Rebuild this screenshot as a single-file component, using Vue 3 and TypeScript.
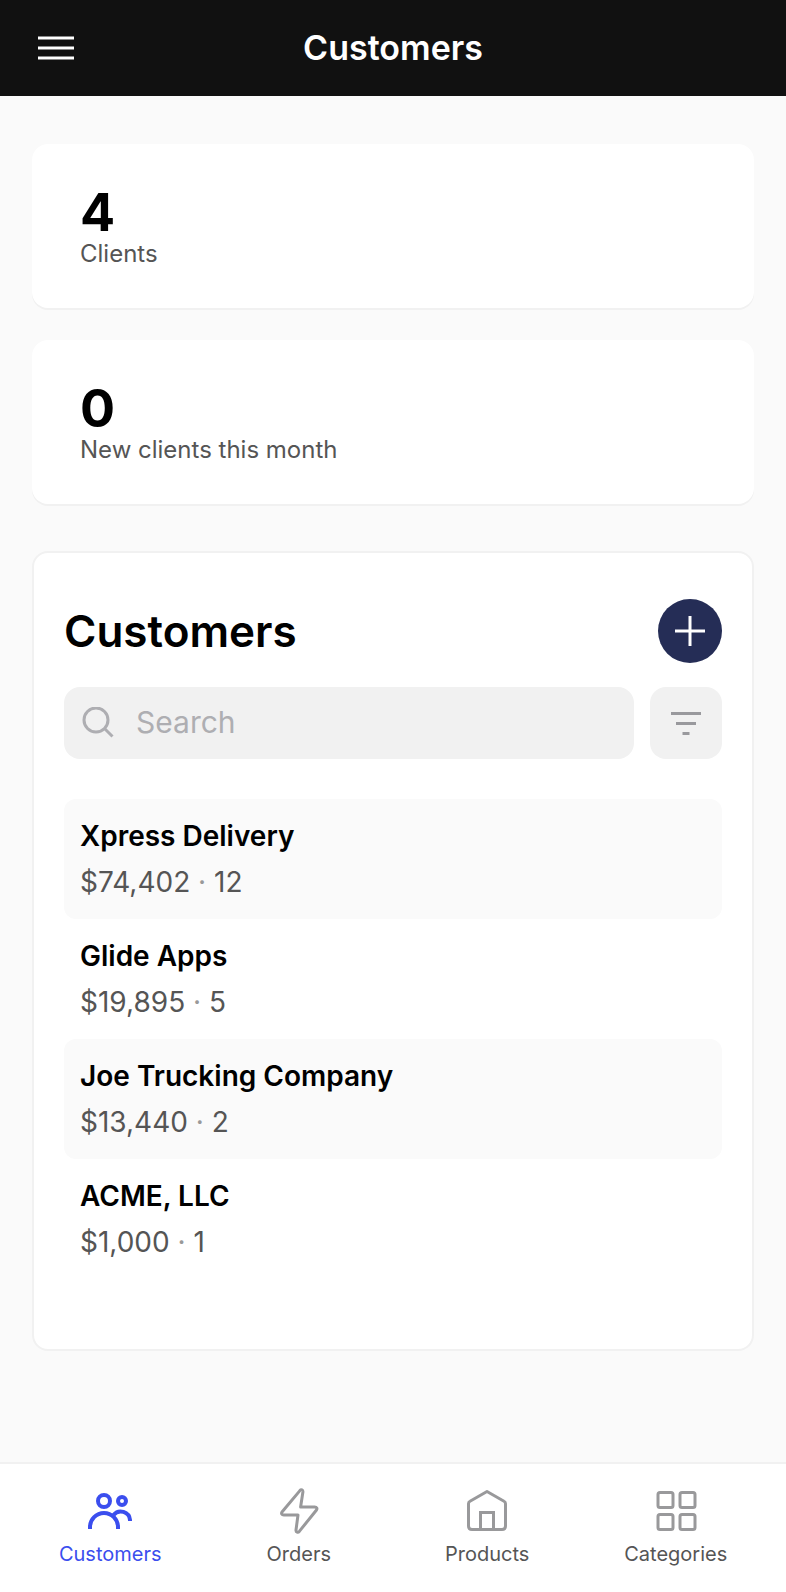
<script setup lang="ts">
import { ref } from 'vue'

interface Stat {
  value: number
  label: string
}

interface Customer {
  name: string
  total: string
  orders: number
}

type TabId = 'customers' | 'orders' | 'products' | 'categories'

const stats: Stat[] = [
  { value: 4, label: 'Clients' },
  { value: 0, label: 'New clients this month' },
]

const customers: Customer[] = [
  { name: 'Xpress Delivery', total: '$74,402', orders: 12 },
  { name: 'Glide Apps', total: '$19,895', orders: 5 },
  { name: 'Joe Trucking Company', total: '$13,440', orders: 2 },
  { name: 'ACME, LLC', total: '$1,000', orders: 1 },
]

const tabs: { id: TabId; label: string }[] = [
  { id: 'customers', label: 'Customers' },
  { id: 'orders', label: 'Orders' },
  { id: 'products', label: 'Products' },
  { id: 'categories', label: 'Categories' },
]

const activeTab = ref<TabId>('customers')
const query = ref('')
</script>

<template>
  <div class="app">
    <header class="topbar">
      <button class="menu" type="button" aria-label="Open menu">
        <svg viewBox="0 0 36 24" width="36" height="24" aria-hidden="true">
          <path d="M0 2h36M0 12h36M0 22h36" fill="none" stroke="currentColor" stroke-width="3" />
        </svg>
      </button>
      <h1 class="topbar-title">Customers</h1>
    </header>

    <main class="content">
      <section class="stats" aria-label="Summary">
        <div v-for="stat in stats" :key="stat.label" class="stat">
          <strong class="stat-value">{{ stat.value }}</strong>
          <span class="stat-label">{{ stat.label }}</span>
        </div>
      </section>

      <section class="panel">
        <div class="panel-head">
          <h2 class="panel-title">Customers</h2>
          <button class="add" type="button" aria-label="Add customer">
            <svg viewBox="0 0 30 30" width="30" height="30" aria-hidden="true">
              <path d="M15 0v30M0 15h30" fill="none" stroke="currentColor" stroke-width="3" />
            </svg>
          </button>
        </div>

        <div class="tools">
          <label class="search">
            <svg viewBox="0 0 32 32" width="32" height="32" aria-hidden="true">
              <g fill="none" stroke="currentColor" stroke-width="3">
                <circle cx="14" cy="13" r="12" />
                <path d="M22.5 21.5L30.5 29.5" />
              </g>
            </svg>
            <input v-model="query" class="search-input" type="text" placeholder="Search" aria-label="Search" />
          </label>
          <button class="filter" type="button" aria-label="Filter">
            <svg viewBox="0 0 30 24" width="30" height="24" aria-hidden="true">
              <path d="M0 2.5h30M5 12.5h20M11.5 22.5h7" fill="none" stroke="currentColor" stroke-width="3" />
            </svg>
          </button>
        </div>

        <ul class="rows">
          <li v-for="customer in customers" :key="customer.name">
            <a class="row" href="#">
              <span class="row-name">{{ customer.name }}</span>
              <span class="row-meta">{{ customer.total }} <span class="dot">·</span> {{ customer.orders }}</span>
            </a>
          </li>
        </ul>
      </section>
    </main>

    <nav class="tabs" aria-label="Main">
      <a
        v-for="tab in tabs"
        :key="tab.id"
        class="tab"
        :class="{ active: tab.id === activeTab }"
        :aria-current="tab.id === activeTab ? 'page' : undefined"
        href="#"
        @click.prevent="activeTab = tab.id"
      >
        <svg class="tab-icon" viewBox="0 0 48 48" width="48" height="48" aria-hidden="true">
          <g v-if="tab.id === 'customers'" fill="none" stroke="currentColor" stroke-width="4">
            <circle cx="18" cy="14" r="6" />
            <circle cx="36" cy="14" r="4" />
            <path d="M4 42v-2a14 14 0 0 1 28 0v2" />
            <path d="M27.5 28A9.3 9.3 0 0 1 44 33v1" />
          </g>
          <path
            v-else-if="tab.id === 'orders'"
            d="M24.9 3.6L7.2 24.8C5.9 26.4 6.8 28 8.8 28H23L21 43C20.8 45.2 23 45.9 24.3 44.4L41.3 23.2C42.6 21.6 41.7 20 39.7 20H25.6L27.9 5C28.1 2.9 26.2 2.1 24.9 3.6Z"
            fill="none"
            stroke="currentColor"
            stroke-width="3"
            stroke-linejoin="round"
          />
          <g v-else-if="tab.id === 'products'" fill="none" stroke="currentColor" stroke-width="3">
            <path d="M24 4.5L41 14.2Q42.5 15 42.5 16.7V39Q42.5 42.5 39 42.5H9Q5.5 42.5 5.5 39V16.7Q5.5 15 7 14.2Z" stroke-linejoin="round" />
            <path d="M17.5 42.5V25.5H30.5V42.5" />
          </g>
          <g v-else fill="none" stroke="currentColor" stroke-width="3">
            <rect x="6" y="5.5" width="15" height="15" rx="2" />
            <rect x="28" y="5.5" width="15" height="15" rx="2" />
            <rect x="6" y="27.5" width="15" height="15" rx="2" />
            <rect x="28" y="27.5" width="15" height="15" rx="2" />
          </g>
        </svg>
        <span class="tab-label">{{ tab.label }}</span>
      </a>
    </nav>
  </div>
</template>

<style>
body {
  margin: 0;
  background: #fafafa;
}
</style>

<style scoped>
.app {
  display: flex;
  flex-direction: column;
  min-height: 100vh;
  background: #fafafa;
  color: #000;
  font-family: Inter, "Liberation Sans", sans-serif;
}

h1,
h2,
ul {
  margin: 0;
  padding: 0;
}

button {
  display: flex;
  align-items: center;
  justify-content: center;
  padding: 0;
  border: 0;
  cursor: pointer;
}

a {
  color: inherit;
  text-decoration: none;
}

svg {
  display: block;
  flex: none;
}

.topbar {
  display: grid;
  grid-template-columns: 48px 1fr 48px;
  align-items: center;
  height: 96px;
  padding: 0 32px;
  background: #111;
  color: #fff;
}

.menu {
  width: 48px;
  height: 48px;
  background: none;
  color: #fff;
}

.topbar-title {
  font-size: 34px;
  font-weight: 600;
  line-height: 40px;
  text-align: center;
}

.content {
  flex: 1;
  padding: 48px 32px;
}

.stats {
  display: grid;
  gap: 32px;
}

.stat {
  display: flex;
  flex-direction: column;
  padding: 44px 48px 38px;
  border-radius: 16px;
  background: #fff;
  box-shadow: 0 2px 0 #f1f1f1;
}

.stat-value {
  font-size: 52px;
  font-weight: 700;
  line-height: 50px;
}

.stat-label {
  font-size: 24px;
  line-height: 32px;
  color: #555;
}

.panel {
  margin-top: 47px;
  padding: 46px 30px 70px;
  border: 2px solid #f1f1f1;
  border-radius: 16px;
  background: #fff;
}

.panel-head {
  display: flex;
  align-items: center;
  justify-content: space-between;
}

.panel-title {
  font-size: 44px;
  font-weight: 600;
  line-height: 64px;
}

.add {
  width: 64px;
  height: 64px;
  border-radius: 50%;
  background: #252d56;
  color: #fff;
}

.tools {
  display: flex;
  gap: 16px;
  margin-top: 24px;
}

.search {
  display: flex;
  flex: 1;
  align-items: center;
  gap: 22px;
  min-width: 0;
  height: 72px;
  padding: 0 18px;
  border-radius: 16px;
  background: #f1f1f1;
  box-sizing: border-box;
  color: #aeaeb2;
}

.search-input {
  flex: 1;
  min-width: 0;
  padding: 0 0 2px;
  border: 0;
  outline: 0;
  background: none;
  color: #000;
  font: 400 30px/40px Inter, "Liberation Sans", sans-serif;
}

.search-input::placeholder {
  color: #aeaeb2;
  opacity: 1;
}

.filter {
  width: 72px;
  height: 72px;
  border-radius: 16px;
  background: #f1f1f1;
  color: #99999d;
}

.rows {
  margin-top: 40px;
  list-style: none;
}

.row {
  display: flex;
  flex-direction: column;
  gap: 8px;
  padding: 18px 16px;
  border-radius: 12px;
}

li:nth-child(odd) .row {
  background: #fafafa;
}

.row-name,
.row-meta {
  font-size: 28px;
  line-height: 38px;
}

.row-name {
  font-weight: 600;
}

.row-meta {
  color: #555;
}

.dot {
  color: #999;
}

.tabs {
  position: sticky;
  bottom: 0;
  display: grid;
  grid-template-columns: repeat(4, 1fr);
  padding: 23px 16px 26px;
  border-top: 2px solid #f1f1f1;
  background: #fff;
}

.tab {
  display: flex;
  flex-direction: column;
  align-items: center;
  gap: 7px;
  color: #555;
}

.tab-icon {
  color: #99999b;
}

.tab-label {
  font-size: 20px;
  line-height: 24px;
}

.active,
.active .tab-icon {
  color: #3b4eee;
}
</style>
